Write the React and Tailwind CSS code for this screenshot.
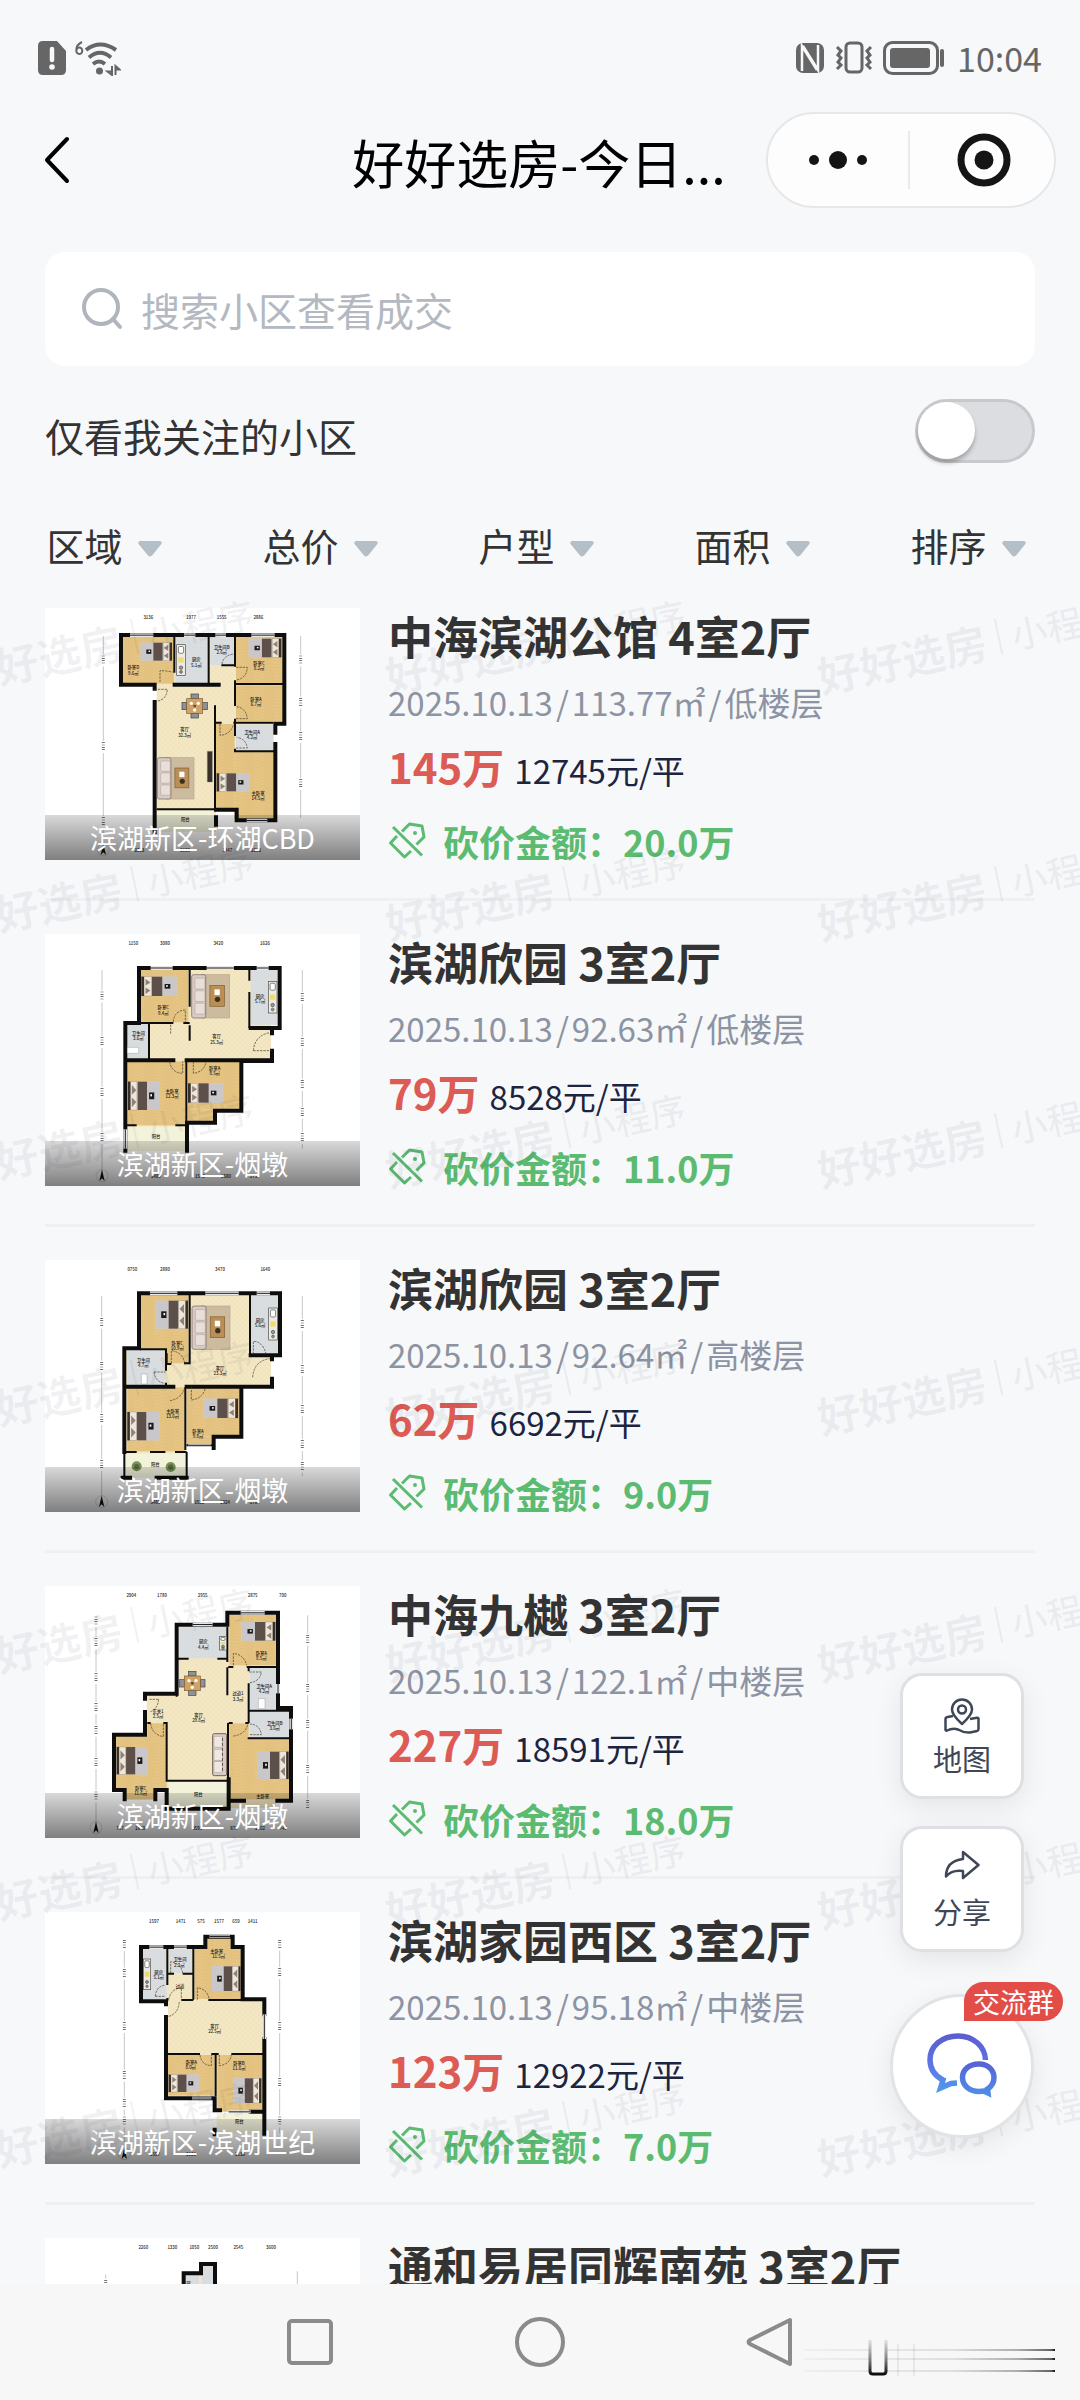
import React, { useState } from "react";

const FONT = "font-['Noto_Sans_CJK_SC',sans-serif]";

const FILL = { wood: "#e6c584", tile: "#dadde0", beige: "#f3e7c4", pale: "#f3f3dc", rug: "#cdbba0" };

/* ---------- floor plan furniture ---------- */

function Bed({ x, y, w, h, head }) {
  const flip = head === "r";
  return (
    <g transform={flip ? `translate(${x + w} ${y}) scale(-1 1)` : `translate(${x} ${y})`}>
      <rect width={w} height={h} fill="#d9d6d3" />
      <rect width={w * 0.28} height={h} fill="#efe6da" stroke="#8b7d70" strokeWidth="1" />
      <rect width={w * 0.08} height={h} fill="#3a302b" />
      <path d={`M${w * 0.12} ${h * 0.12} L${w * 0.26} ${h * 0.3} L${w * 0.12} ${h * 0.46}Z`} fill="#8f8175" />
      <path d={`M${w * 0.12} ${h * 0.56} L${w * 0.26} ${h * 0.72} L${w * 0.12} ${h * 0.9}Z`} fill="#8f8175" />
      <rect x={w * 0.3} width={w * 0.3} height={h} fill="#5d504a" />
      <rect x={w * 0.6} width={w * 0.4} height={h} fill="#c9c7c9" />
      <rect x={w * 0.66} y={h * 0.38} width={w * 0.16} height={h * 0.24} fill="#1c1a19" />
      <rect x={w * 0.7} y={h * 0.44} width={w * 0.05} height={h * 0.08} fill="#fff" />
    </g>
  );
}

function Lounge({ x, y, w, h }) {
  return (
    <g transform={`translate(${x} ${y})`}>
      <rect x={w * 0.25} width={w * 0.75} height={h} fill={FILL.rug} stroke="#b9a68a" strokeWidth="2" />
      <rect width={w * 0.37} height={h} rx="6" fill="#d8cbc3" stroke="#6f625b" strokeWidth="2" />
      <rect x="10" y={h * 0.08} width={w * 0.26} height={h * 0.25} rx="4" fill="#e9dfd8" stroke="#8d8078" strokeWidth="1" />
      <rect x="10" y={h * 0.37} width={w * 0.26} height={h * 0.25} rx="4" fill="#e9dfd8" stroke="#8d8078" strokeWidth="1" />
      <rect x="10" y={h * 0.66} width={w * 0.26} height={h * 0.25} rx="4" fill="#e9dfd8" stroke="#8d8078" strokeWidth="1" />
      <rect x={w * 0.48} y={h * 0.25} width={w * 0.38} height={h * 0.48} fill="#b98f55" stroke="#7d5c31" strokeWidth="2" />
      <rect x={w * 0.6} y={h * 0.34} width={w * 0.14} height={h * 0.13} fill="#fff" />
      <circle cx={w * 0.68} cy={h * 0.57} r={w * 0.07} fill="#3a2f22" />
    </g>
  );
}

function Sofa({ x, y, w, h }) {
  return (
    <g transform={`translate(${x} ${y})`}>
      <rect width={w} height={h} rx="5" fill="#d8cbc3" stroke="#6f625b" strokeWidth="3" />
      <rect x="4" y={h * 0.06} width={w * 0.6} height={h * 0.26} fill="#efe7e1" stroke="#8d8078" strokeWidth="1" />
      <rect x="4" y={h * 0.37} width={w * 0.6} height={h * 0.26} fill="#efe7e1" stroke="#8d8078" strokeWidth="1" />
      <rect x="4" y={h * 0.67} width={w * 0.6} height={h * 0.26} fill="#efe7e1" stroke="#8d8078" strokeWidth="1" />
      <path d={`M${w * 0.7} ${h * 0.1} V${h * 0.9}`} stroke="#5b4e48" strokeWidth="3" strokeDasharray="9 6" />
    </g>
  );
}

function Dining({ x, y }) {
  return (
    <g transform={`translate(${x} ${y})`}>
      <g fill="#8c9298" stroke="#3c4044" strokeWidth="2">
        <rect x="-11" y="-36" width="22" height="14" />
        <rect x="-11" y="22" width="22" height="14" />
        <rect x="-38" y="-11" width="14" height="22" />
        <rect x="24" y="-11" width="14" height="22" />
      </g>
      <rect x="-24" y="-22" width="48" height="44" fill="#cfa367" stroke="#7d5c31" strokeWidth="2" />
      <circle cx="-10" cy="-8" r="5" fill="#fff" />
      <circle cx="11" cy="-8" r="5" fill="#fff" />
      <circle cx="0" cy="12" r="5" fill="#fff" />
      <circle cx="0" cy="0" r="4" fill="#5f4322" />
    </g>
  );
}

function Stove({ x, y, w, h }) {
  return (
    <g transform={`translate(${x} ${y})`} stroke="#4a4a4a">
      <rect width={w} height={h} fill="#eceae2" strokeWidth="2" />
      <rect x={w * 0.2} y={h * 0.06} width={w * 0.6} height={h * 0.22} rx="4" fill="#fff" strokeWidth="2" />
      <rect x={w * 0.2} y={h * 0.42} width={w * 0.6} height={h * 0.16} fill="#eedb6a" stroke="none" />
      <circle cx={w * 0.5} cy={h * 0.75} r={w * 0.2} fill="#999" strokeWidth="2" />
      <circle cx={w * 0.5} cy={h * 0.89} r={w * 0.16} fill="#999" strokeWidth="2" />
    </g>
  );
}

const FURNITURE = { bed: Bed, lounge: Lounge, sofa: Sofa, dining: Dining, stove: Stove };

/* ---------- floor plan data ---------- */

const PLANS = {
  harbour: {
    box: "15 28 945 756",
    base: "M248 115H728V370H700V660H596V630H528V700H350V258H248Z",
    rooms: [
      ["wood", 248, 115, 154, 140], ["tile", 406, 115, 98, 138], ["tile", 511, 115, 72, 84],
      ["wood", 588, 115, 140, 138], ["wood", 588, 260, 140, 108], ["tile", 588, 378, 112, 78],
      ["wood", 528, 376, 56, 254], ["wood", 583, 460, 117, 200], ["pale", 350, 636, 172, 64],
    ],
    outer: "M404 258H536M243 109H733V375H706V402M706 436V665H590V633H528M243 109V258H344V270M344 310V700M528 656V678",
    inner: "M403 109V222M506 109V256M585 109V204M585 245V322M585 360V376M544 200H585M585 256H733M525 320V630M350 632H525M525 372H545M580 372H700M585 376V412M585 450V458H706",
    windows: [[270, 104, 70, 11], [432, 104, 34, 11], [526, 104, 32, 11], [634, 104, 70, 11], [620, 660, 62, 11]],
    doors: "M360 250V216Q375 216 398 220M344 272H382Q380 304 348 308M588 206H622Q620 238 590 244M588 360H622Q618 328 590 324M540 376V410Q570 408 580 380M588 448H622Q618 420 590 416M546 196Q550 170 582 166",
    furniture: [
      ["bed", 302, 132, 94, 54, "r"], ["bed", 626, 120, 98, 56, "r"], ["bed", 530, 524, 98, 54, "l"],
      ["stove", 410, 138, 26, 92], ["dining", 464, 322], ["lounge", 352, 477, 110, 124],
    ],
    extra: "M502 458H517V550H502Z",
    labels: [
      [280, 207, "卧室D"], [280, 224, "9.6㎡"], [469, 184, "厨房"], [469, 200, "5.1㎡"], [545, 146, "卫生间B"],
      [545, 161, "2.6㎡"], [657, 194, "卧室C"], [657, 210, "8.2㎡"], [648, 302, "卧室A"], [648, 318, "6.7㎡"],
      [434, 394, "客厅"], [434, 411, "32.3㎡"], [636, 402, "卫生间A"], [636, 418, "4.2㎡"], [654, 584, "主卧室"],
      [654, 600, "14.5㎡"], [436, 664, "阳台"],
    ],
    top: [[325, "3136"], [453, "1977"], [545, "1555"], [655, "2886"]],
    bottom: [[298, "2313"], [435, "3608"], [562, "1447"], [648, "2363"]],
    left: [190, 112, 750, [185, 445, 670]],
    right: [782, 112, 658, [185, 312, 415, 556]],
  },
  garden: {
    box: "15 18 945 756",
    base: "M303 125H715V292H693V400H600V545H525V580H440V668H262V290H303Z",
    rooms: [
      ["wood", 303, 125, 142, 158], ["tile", 632, 125, 80, 165], ["tile", 262, 288, 64, 104],
      ["wood", 262, 400, 174, 192], ["wood", 443, 400, 156, 145], ["wood", 443, 545, 78, 35], ["pale", 262, 596, 172, 72],
    ],
    outer: "M297 285V120H719V300H632M696 300V316M696 368V399H604V548H525V584H441V668M297 285H256V668M256 397H400M440 397H696",
    inner: "M449 120V236M449 292V338M300 285H400M430 285H449M327 288V395M628 120V158M628 192V300M439 400V590M256 592H290M406 592H440",
    windows: [[332, 114, 66, 12], [500, 114, 82, 12], [650, 114, 36, 12], [250, 604, 12, 58]],
    doors: "M400 282Q402 248 436 246V285M640 368Q644 322 690 314M640 368H696M388 400Q396 436 428 436V400M460 400V436Q492 432 498 402M392 290V320",
    furniture: [
      ["bed", 304, 146, 106, 58, "l"], ["bed", 264, 461, 96, 85, "l"], ["bed", 444, 466, 104, 58, "l"],
      ["lounge", 455, 140, 114, 130], ["stove", 685, 160, 26, 95],
    ],
    extra: "M262 358H296V376H262Z",
    extraFill: "#fff",
    labels: [
      [370, 240, "卧室C"], [370, 256, "9.4㎡"], [530, 326, "客厅"], [530, 343, "25.3㎡"], [660, 206, "厨房"], [660, 222, "5.7㎡"],
      [295, 318, "卫生间"], [295, 333, "3.6㎡"], [396, 490, "主卧室"], [396, 506, "12.3㎡"], [524, 422, "卧室A"], [524, 438, "8.5㎡"],
      [348, 625, "阳台"],
    ],
    top: [[280, "1150"], [375, "3080"], [535, "3420"], [675, "1626"]],
    bottom: [[348, "3480"], [480, "1540"], [558, "1580"], [644, "1751"]],
    left: [186, 126, 740, [205, 342, 495, 630]],
    right: [787, 126, 662, [210, 345, 470, 555, 630]],
  },
  gardenHigh: {
    box: "15 20 945 756",
    base: "M303 125H717V300H693V400H600V550H520V578H438V672H254V290H303Z",
    rooms: [
      ["wood", 303, 125, 142, 205], ["tile", 632, 125, 82, 175], ["tile", 262, 290, 112, 106],
      ["wood", 262, 402, 172, 192], ["wood", 441, 402, 158, 148], ["wood", 441, 550, 76, 28], ["pale", 256, 600, 182, 72],
    ],
    outer: "M297 285V120H720V306H632M696 306V318M696 376V400H604V550H521V584M297 285H253V596M253 400H400M440 400H696M248 673H270M350 673H440",
    inner: "M449 120V330H432M380 300V332H394M300 288H378V352M378 388V398M630 120V306M436 402V590M253 596H290M330 596H376M405 596H440M440 576H521M253 600V672M440 596V668",
    windows: [[330, 114, 82, 12], [496, 114, 100, 12], [650, 114, 40, 12], [445, 573, 68, 8]],
    doors: "M394 330V292Q428 296 434 330M342 356H376M342 356Q346 386 374 390M390 442Q424 436 434 404M454 400V440Q488 436 496 404M640 302V264Q668 264 678 302M638 372Q642 322 690 316",
    furniture: [
      ["bed", 346, 142, 98, 84, "r"], ["bed", 262, 476, 96, 85, "l"], ["bed", 490, 436, 104, 58, "r"],
      ["lounge", 456, 158, 114, 130], ["stove", 686, 164, 26, 96],
    ],
    extra: "M304 362H321V392H304Z",
    extraFill: "#fff",
    plants: [[290, 639], [392, 641]],
    labels: [
      [412, 270, "卧室C"], [412, 286, "10.9㎡"], [540, 346, "客厅"], [540, 361, "23.3㎡"], [660, 203, "厨房"], [660, 218, "5.6㎡"],
      [310, 322, "卫生间"], [310, 338, "4.7㎡"], [398, 474, "主卧室"], [398, 491, "13.6㎡"], [474, 536, "卧室A"], [474, 551, "9.8㎡"],
      [346, 634, "阳台"],
    ],
    top: [[277, "0750"], [375, "2880"], [540, "3470"], [676, "1640"]],
    bottom: [[346, "3480"], [478, "1532"], [555, "1824"], [644, "1786"]],
    left: [185, 128, 740, [208, 340, 497, 635]],
    right: [787, 128, 668, [215, 350, 470, 575, 640]],
  },
  jiuyue: {
    box: "15 24 945 756",
    base: "M418 146H568V110H708V395H748V665H708V690H384V630H350V665H250V630H228V475H320V352H416Z",
    rooms: [
      ["tile", 418, 146, 142, 95], ["wood", 568, 110, 141, 152], ["tile", 630, 270, 79, 124], ["tile", 630, 402, 118, 78],
      ["wood", 228, 475, 152, 155], ["wood", 322, 436, 58, 50], ["wood", 250, 628, 90, 36], ["wood", 568, 436, 58, 228],
      ["wood", 620, 484, 128, 180], ["pale", 386, 612, 174, 78],
    ],
    outer: "M410 347V140H562V104H714V390H753V668H712M568 668H612M714 668H753M410 347H315V362M315 402V470H222V636H254V664M346 664V636H380M380 636V692H566V604",
    inner: "M562 146V252M562 268V352M410 242H446M532 242H562M626 265V280M626 316V436M565 267H580M620 267H714M626 398H753M380 432V608H562M322 435H332M370 435H380M566 435H578M616 435H626M564 435V604M626 478V481H753M410 347V356",
    windows: [[458, 134, 60, 11], [602, 99, 72, 11], [708, 318, 12, 28], [748, 422, 12, 32]],
    doors: "M580 262V226Q612 230 620 262M628 282H664Q660 310 630 314M328 364H356M356 364Q352 396 328 402M332 436Q336 470 370 476V436M580 474Q616 470 624 438M630 470H664Q660 440 630 438",
    furniture: [
      ["bed", 604, 132, 102, 56, "r"], ["bed", 230, 507, 94, 82, "l"], ["bed", 652, 521, 94, 82, "r"],
      ["dining", 457, 316], ["sofa", 518, 467, 42, 126], ["stove", 538, 176, 22, 40],
    ],
    extra: "M655 362H675V392H655Z",
    extraFill: "#fff",
    labels: [
      [490, 192, "厨房"], [490, 208, "4.4㎡"], [664, 226, "卧室A"], [664, 241, "8.5㎡"], [672, 326, "卫生间A"], [672, 342, "4.2㎡"],
      [594, 348, "过道1"], [594, 364, "3.3㎡"], [354, 400, "玄关1"], [354, 416, "2.5㎡"], [476, 413, "客厅"], [476, 429, "29.8㎡"],
      [704, 437, "卫生间B"], [704, 453, "3.6㎡"], [302, 632, "卧室C"], [302, 646, "11.6㎡"], [668, 656, "主卧室"], [475, 650, "阳台"],
    ],
    top: [[274, "2904"], [366, "1780"], [488, "2955"], [638, "2875"], [728, "700"]],
    bottom: [[240, "757"], [300, "1803"], [472, "3595"], [582, "870"], [660, "2502"], [730, "740"]],
    left: [168, 112, 740, [130, 195, 300, 390, 458, 555, 655]],
    right: [803, 112, 692, [185, 332, 440, 575, 680]],
  },
  century: {
    box: "15 27 945 756",
    base: "M306 138H500V106H574V138H604V290H670V625H530V578H384V290H306Z",
    rooms: [
      ["tile", 306, 138, 74, 150], ["tile", 386, 138, 70, 72], ["wood", 464, 138, 140, 150], ["wood", 500, 106, 74, 36],
      ["wood", 384, 456, 140, 122], ["wood", 532, 456, 136, 170], ["pale", 530, 630, 138, 62],
    ],
    outer: "M378 295H303V132H496V101H578V132H608V289H673V334M673 408V628M378 295V304M378 342V586H524V622H540M632 626H673V692M524 680V694",
    inner: "M382 132V246M460 132V290M382 212H402M428 212H460M424 291H460M505 291H608M382 453H480M514 453H536M574 453H673M527 453V580M382 285V295",
    windows: [[328, 127, 42, 11], [402, 127, 38, 11], [508, 97, 62, 7], [456, 581, 58, 8], [668, 334, 10, 74], [566, 622, 66, 9]],
    doors: "M472 290V254Q502 258 508 290M386 340Q416 332 418 294M346 280H376M346 280Q348 250 376 246M386 290Q392 258 424 254V290M480 456Q484 486 514 488V456M538 456V488Q570 484 574 456M428 210Q424 182 392 176V210",
    furniture: [["bed", 516, 190, 86, 74, "r"], ["bed", 386, 515, 90, 52, "l"], ["bed", 580, 526, 84, 74, "r"], ["stove", 310, 168, 22, 92]],
    labels: [
      [356, 208, "厨房"], [356, 223, "5.1㎡"], [420, 170, "卫生间"], [418, 187, "2.2㎡"], [420, 250, "过道"], [530, 146, "主卧室"], [536, 160, "11.5㎡"],
      [524, 370, "客厅"], [524, 385, "22.5㎡"], [454, 478, "卧室A"], [452, 493, "8.0㎡"], [597, 482, "卧室B"], [597, 497, "11.6㎡"],
      [598, 656, "阳台"],
    ],
    top: [[342, "1597"], [422, "1471"], [483, "575"], [537, "1577"], [588, "659"], [638, "1411"]],
    bottom: [[345, "1597"], [453, "3131"], [600, "3130"]],
    left: [253, 108, 760, [125, 212, 372, 518, 602, 655]],
    right: [719, 108, 690, [125, 210, 372, 540, 655]],
  },
  huinan: {
    box: "0 0 945 756",
    base: "M418 108H470V84H508V300H418Z",
    rooms: [["tile", 418, 100, 44, 200], ["tile", 470, 84, 38, 220]],
    outer: "M416 300V106H468V78H510V300",
    inner: "",
    windows: [],
    doors: "",
    furniture: [],
    labels: [[430, 136, "厨"]],
    top: [[295, "2260"], [382, "1330"], [448, "1050"], [504, "2500"], [580, "2545"], [678, "3600"]],
    bottom: [],
    left: [182, 110, 640, [140]],
    right: [757, 100, 640, []],
  },
};

function FloorPlan({ id }) {
  const p = PLANS[id];
  const [, y0] = p.box.split(" ").map(Number);
  return (
    <svg viewBox={p.box} className="block h-full w-full" role="img" aria-label="户型图" preserveAspectRatio="xMidYMid meet">
      <defs>
        <pattern id={`wood-${id}`} width="60" height="10" patternUnits="userSpaceOnUse">
          <rect width="60" height="10" fill={FILL.wood} />
          <path d="M0 2H40M15 7H60" stroke="#dfbd78" strokeWidth="2" />
        </pattern>
        <pattern id={`beige-${id}`} width="16" height="16" patternUnits="userSpaceOnUse">
          <rect width="16" height="16" fill={FILL.beige} />
          <path d="M0 0L16 16M16 0L0 16" stroke="#eddcae" strokeWidth="1" />
        </pattern>
        <pattern id={`tile-${id}`} width="12" height="12" patternUnits="userSpaceOnUse">
          <rect width="12" height="12" fill={FILL.tile} />
          <path d="M0 0H12M0 0V12" stroke="#cfd3d7" strokeWidth="1" />
        </pattern>
      </defs>
      <path d={p.base} fill={`url(#beige-${id})`} />
      {p.rooms.map(([kind, x, y, w, h], i) => (
        <rect key={i} x={x} y={y} width={w} height={h} fill={kind === "pale" ? FILL.pale : `url(#${kind}-${id})`} />
      ))}
      <path d={p.inner} fill="none" stroke="#0d0d0d" strokeWidth="6" />
      <path d={p.outer} fill="none" stroke="#0d0d0d" strokeWidth="12" strokeLinecap="square" />
      {p.windows.map(([x, y, w, h], i) => (
        <g key={i}>
          <rect x={x} y={y} width={w} height={h} fill="#e8e8e8" />
          <path d={w > h ? `M${x} ${y + h / 2}H${x + w}` : `M${x + w / 2} ${y}V${y + h}`} stroke="#222" strokeWidth="3" />
        </g>
      ))}
      <path d={p.doors} fill="none" stroke="#3b3524" strokeWidth="2" strokeDasharray="7 3" />
      {p.furniture.map(([kind, x, y, w, h, head], i) => {
        const Piece = FURNITURE[kind];
        return <Piece key={i} x={x} y={y} w={w} h={h} head={head} />;
      })}
      {p.extra && <path d={p.extra} fill={p.extraFill || "#3a302b"} stroke="#777" strokeWidth="1" />}
      {(p.plants || []).map(([x, y]) => (
        <g key={x}>
          <circle cx={x} cy={y} r="15" fill="#7c9159" />
          <circle cx={x} cy={y} r="8" fill="#52683a" />
        </g>
      ))}
      <g fontSize="13" fontWeight="500" fill="#1a1a1a" textAnchor="middle">
        {p.labels.map(([x, y, t]) => (
          <text key={`${x}-${y}`} x={x} y={y + 4}>{t}</text>
        ))}
        {p.top.map(([x, t]) => (
          <text key={x} x={x} y={y0 + 34}>{t}</text>
        ))}
        {p.bottom.map(([x, t]) => (
          <text key={x} x={x} y={y0 + 733}>{t}</text>
        ))}
      </g>
      {[p.left, p.right].map(([x, a, b, marks]) => (
        <g key={x}>
          <path d={`M${x} ${a}V${b}`} stroke="#aaa" strokeWidth="2" />
          {marks.map((m) => (
            <g key={m}>
              <rect x={x - 5} y={m - 18} width="10" height="36" fill="#fff" />
              <path d={`M${x} ${m - 14}V${m + 14}`} stroke="#444" strokeWidth="9" strokeDasharray="2 5" />
            </g>
          ))}
        </g>
      ))}
      <g transform={`translate(${p.left[0]} ${y0 + 725})`}>
        <circle r="18" fill="none" stroke="#999" strokeWidth="1" />
        <path d="M0 -18L8 16L0 8L-8 16Z" fill="#111" />
      </g>
    </svg>
  );
}

/* ---------- icons ---------- */

function CutTagIcon() {
  return (
    <svg viewBox="0 0 38 38" className="size-[38px] shrink-0" fill="none" stroke="currentColor" strokeWidth="3" strokeLinejoin="round" aria-hidden="true">
      <path d="M14 9.500L21.500 2L34 4L36 15L28.500 22.500" />
      <path d="M9 14L2.500 21L16.500 35L23 29" />
      <path d="M5 5L34 33.500" />
      <circle cx="27" cy="11" r="2" fill="currentColor" stroke="none" />
    </svg>
  );
}

function StatusBar() {
  return (
    <div className="flex h-[104px] items-center justify-between px-[38px] pt-3 text-[#666]">
      <div className="flex items-center gap-[9px]">
        <svg viewBox="0 0 28 34" className="h-[34px] w-[28px]" aria-label="SIM">
          <path d="M5 0H19L28 10V29Q28 34 23 34H5Q0 34 0 29V5Q0 0 5 0Z" fill="currentColor" />
          <path d="M14 8V19" stroke="#f7f8fa" strokeWidth="4.500" strokeLinecap="round" />
          <circle cx="14" cy="26" r="2.800" fill="#f7f8fa" />
        </svg>
        <svg viewBox="0 0 46 36" className="h-9 w-[46px]" fill="none" stroke="currentColor" aria-label="Wi-Fi 6">
          <path d="M7 2Q1 5 1.300 10.500A3 3.300 0 1 0 4 7.500Q2 7.500 1.500 10" strokeWidth="2" />
          <path d="M11 10Q25 -1 41 10M14 17.500Q25 8 36 17.500M18 24Q24 19 30 24" strokeWidth="4" />
          <circle cx="24.500" cy="31" r="3.500" fill="currentColor" stroke="none" />
          <path d="M37 26V35L32.500 31.500H38M40.500 35V26L44.500 29.500H40" strokeWidth="2" />
        </svg>
      </div>
      <div className="flex items-center gap-[10px]">
        <svg viewBox="0 0 30 32" className="h-8 w-[30px]" aria-label="NFC">
          <rect x="1" y="1" width="28" height="30" rx="7" fill="currentColor" />
          <path d="M7 29V4L22 28" fill="none" stroke="#f7f8fa" strokeWidth="2.500" />
          <path d="M23 3V28L8 4" fill="none" stroke="#f7f8fa" strokeWidth="2.500" />
        </svg>
        <svg viewBox="0 0 38 34" className="h-[34px] w-[38px]" fill="none" stroke="currentColor" aria-label="振动">
          <rect x="11" y="2" width="16" height="29" rx="4" strokeWidth="3" />
          <path d="M2 6L6 10L3 14L6 17L3 21L6 24L2 28M36 6L32 10L35 14L32 17L35 21L32 24L36 28" strokeWidth="3" />
        </svg>
        <svg viewBox="0 0 62 34" className="h-[34px] w-[62px]" aria-label="电量">
          <rect x="1.500" y="1.500" width="53" height="31" rx="8" fill="none" stroke="currentColor" strokeWidth="3" />
          <rect x="7" y="7" width="40" height="20" rx="3" fill="currentColor" />
          <path d="M59 10V24" stroke="currentColor" strokeWidth="4" strokeLinecap="round" />
        </svg>
        <time className="pl-0.5 text-[34px] leading-[40px]">10:04</time>
      </div>
    </div>
  );
}

function Header() {
  return (
    <header className="grid h-[112px] grid-cols-[1fr_auto_1fr] items-center pr-6 pl-[42px]">
      <button type="button" aria-label="返回" className="justify-self-start text-black">
        <svg viewBox="0 0 28 48" className="h-12 w-[28px]" fill="none" stroke="currentColor" strokeWidth="4" strokeLinecap="round" strokeLinejoin="round">
          <path d="M25 3L5 24L25 45" />
        </svg>
      </button>
      <h1 className="pt-1 pr-5 text-[52px] leading-[64px] font-normal text-black">好好选房-今日...</h1>
      <div className="flex h-24 w-[290px] items-center justify-self-end rounded-full border-2 border-[#e6e7e9] bg-[#fdfdfd]">
        <button type="button" aria-label="更多" className="grid h-full flex-1 place-items-center">
          <svg viewBox="0 0 58 20" className="h-5 w-[58px]" fill="#151515">
            <circle cx="5" cy="10" r="5" />
            <circle cx="29" cy="10" r="9" />
            <circle cx="53" cy="10" r="5" />
          </svg>
        </button>
        <span className="h-[58px] w-0.5 bg-[#e9eaec]" />
        <button type="button" aria-label="关闭" className="grid h-full flex-1 place-items-center pl-1">
          <svg viewBox="0 0 54 54" className="size-[54px]">
            <circle cx="27" cy="27" r="23" fill="none" stroke="#151515" strokeWidth="7" />
            <circle cx="27" cy="27" r="9.500" fill="#151515" />
          </svg>
        </button>
      </div>
    </header>
  );
}

function Filters() {
  const names = ["区域", "总价", "户型", "面积", "排序"];
  return (
    <div className="mt-[54px] grid grid-cols-5">
      {names.map((n) => (
        <label key={n} className="flex items-center justify-center gap-[14px] pr-2">
          <select aria-label={n} className="appearance-none bg-transparent text-[38px] leading-[56px] text-[#333]">
            <option>{n}</option>
          </select>
          <svg viewBox="0 0 24 16" className="mt-2 h-4 w-6" fill="#b3bec6" aria-hidden="true">
            <path d="M2 0H22Q25 1 23 3.500L14 14.500Q12 16.500 10 14.500L1 3.500Q-1 1 2 0Z" />
          </svg>
        </label>
      ))}
    </div>
  );
}

/* ---------- listings ---------- */

const LISTINGS = [
  { plan: "harbour", place: "滨湖新区-环湖CBD", title: "中海滨湖公馆 4室2厅", area: "113.77", floor: "低楼层", price: "145", unit: "12745", cut: "20.0" },
  { plan: "garden", place: "滨湖新区-烟墩", title: "滨湖欣园 3室2厅", area: "92.63", floor: "低楼层", price: "79", unit: "8528", cut: "11.0" },
  { plan: "gardenHigh", place: "滨湖新区-烟墩", title: "滨湖欣园 3室2厅", area: "92.64", floor: "高楼层", price: "62", unit: "6692", cut: "9.0" },
  { plan: "jiuyue", place: "滨湖新区-烟墩", title: "中海九樾 3室2厅", area: "122.1", floor: "中楼层", price: "227", unit: "18591", cut: "18.0" },
  { plan: "century", place: "滨湖新区-滨湖世纪", title: "滨湖家园西区 3室2厅", area: "95.18", floor: "中楼层", price: "123", unit: "12922", cut: "7.0" },
  { plan: "huinan", title: "通和易居同辉南苑 3室2厅" },
];

function Listing({ item }) {
  return (
    <li className="shrink-0 border-b-[3px] border-[#eef0f2] pb-[38px]">
      <a href="#detail" className="flex items-start gap-7">
        <div className="relative h-[252px] w-[315px] shrink-0 bg-white">
          <FloorPlan id={item.plan} />
          {item.place && (
            <div className="absolute inset-x-0 bottom-0 bg-linear-to-b from-black/15 to-black/50 text-center text-[27px] leading-[45px] text-white">
              {item.place}
            </div>
          )}
        </div>
        <div className="min-w-0 flex-1 whitespace-nowrap">
          <h2 className="text-[45px] leading-[56px] font-bold text-[#333]">{item.title}</h2>
          {item.price && (
            <>
              <p className="mt-[14px] flex text-[33px] leading-[48px] text-[#8c93a3]">
                <span>2025.10.13</span>
                <span className="px-[3px]">/</span>
                <span>{item.area}㎡</span>
                <span className="px-[3px]">/</span>
                <span>{item.floor}</span>
              </p>
              <p className="mt-3 flex h-14 items-baseline gap-[10px] leading-[56px]">
                <strong className="text-[42px] font-bold text-[#dd5b55]">{item.price}万</strong>
                <span className="text-[33px] text-[#1c2540]">{item.unit}元/平</span>
              </p>
              <p className="mt-7 flex items-center gap-[17px] text-[36px] leading-[38px] font-bold text-[#5bbb70]">
                <CutTagIcon />
                <span>砍价金额：{item.cut}万</span>
              </p>
            </>
          )}
        </div>
      </a>
    </li>
  );
}

function Watermark() {
  return (
    <div aria-hidden="true" className="pointer-events-none absolute inset-x-0 top-0 -ml-9 grid auto-rows-[247px] grid-cols-[432px_432px_432px] pt-[27px] text-[#202840]/6">
      {Array.from({ length: 21 }, (_, i) => (
        <div key={i} className="flex h-[100px] origin-bottom-left -rotate-12 items-center whitespace-nowrap">
          <span className="text-[43px] font-bold">好好选房</span>
          <span className="mx-3 h-9 w-0.5 bg-current" />
          <span className="text-[36px] font-medium">小程序</span>
        </div>
      ))}
    </div>
  );
}

function FloatingActions() {
  const tile = "flex h-[126px] w-[124px] flex-col items-center justify-center rounded-[22px] border-[3px] border-[#dfe0e3] bg-white text-[29px] leading-[40px] text-[#3f4757] shadow-[0_8px_28px_rgba(0,0,0,0.08)]";
  return (
    <div className="absolute right-[46px] bottom-[146px] flex flex-col items-center">
      <button type="button" className={tile}>
        <svg viewBox="0 0 36 36" className="mt-1 mb-1 size-9" fill="none" stroke="currentColor" strokeWidth="2.500" strokeLinejoin="round" aria-hidden="true">
          <path d="M18 26Q8 17 8 11.500A10 10 0 0 1 28 11.500Q28 17 18 26Z" />
          <circle cx="18" cy="11.500" r="4" />
          <path d="M9 18L3.500 19Q1.500 19.500 1.500 21V31.500Q1.500 33 3 32.500Q9 29.500 14 31.500Q20 35 26 34.500L33 33Q34.500 32.500 34.500 31V21Q34.500 19.500 33 19.700L26 21" />
        </svg>
        地图
      </button>
      <button type="button" className={`${tile} mt-[27px]`}>
        <svg viewBox="0 0 36 36" className="mb-2 size-9" fill="none" stroke="currentColor" strokeWidth="2.500" strokeLinejoin="round" aria-hidden="true">
          <path d="M19 5L34.500 18L19 31V24Q8 22.500 2 29.500Q2 14 19 12Z" />
        </svg>
        分享
      </button>
      <button type="button" aria-label="交流群" className="relative mt-[42px] grid size-36 place-items-center rounded-full border-[3px] border-[#e2e3e6] bg-white shadow-[0_8px_28px_rgba(0,0,0,0.08)]">
        <svg viewBox="0 0 70 66" className="h-[66px] w-[70px]" fill="none" strokeWidth="5.500" aria-hidden="true">
          <defs>
            <linearGradient id="chat" x1="0" y1="0" x2="0" y2="66" gradientUnits="userSpaceOnUse">
              <stop offset="0" stopColor="#5b5bcf" />
              <stop offset="0.550" stopColor="#5b7ae6" />
              <stop offset="1" stopColor="#4aa5ec" />
            </linearGradient>
            <linearGradient id="chat2" x1="0" y1="28" x2="0" y2="66" gradientUnits="userSpaceOnUse">
              <stop offset="0" stopColor="#5560d6" />
              <stop offset="1" stopColor="#4f93ea" />
            </linearGradient>
          </defs>
          <path d="M58.500 27C58 13 46 3 31 3C15 3 3 13 3 26.500C3 36 8 43 16 47L13.500 55L24 50.500L30 50" stroke="url(#chat)" />
          <path d="M52 31C42 31 35.500 37 35.500 44.500C35.500 53 43 58.500 52 58.500L57 58L61 60L60.500 56C64.500 53.500 67 50 67 44.500C67 37 61 31 52 31Z" stroke="url(#chat2)" />
        </svg>
        <span className="absolute -top-[15px] left-[71px] rounded-[20px] rounded-bl-none bg-[#e34d47] px-[9px] text-[27px] leading-[39px] whitespace-nowrap text-white">交流群</span>
      </button>
    </div>
  );
}

function SystemNav() {
  return (
    <nav className="relative flex h-[116px] shrink-0 items-start justify-center gap-[178px] bg-[#f7f7f7] pt-8 text-[#8b8b8b]">
      <button type="button" aria-label="最近任务">
        <svg viewBox="0 0 52 52" className="size-[52px]" fill="none" stroke="currentColor" strokeWidth="4">
          <rect x="5" y="5" width="42" height="42" rx="3" />
        </svg>
      </button>
      <button type="button" aria-label="主屏幕">
        <svg viewBox="0 0 52 52" className="size-[52px]" fill="none" stroke="currentColor" strokeWidth="4">
          <circle cx="26" cy="26" r="23" />
        </svg>
      </button>
      <button type="button" aria-label="返回上一页">
        <svg viewBox="0 0 52 52" className="size-[52px]" fill="none" stroke="currentColor" strokeWidth="4" strokeLinejoin="round">
          <path d="M46 4V48L6 28Q3 26 6 24Z" />
        </svg>
      </button>
      <svg viewBox="0 0 256 44" className="absolute right-6 bottom-5 h-11 w-64" fill="none" aria-hidden="true">
        <defs>
          <linearGradient id="streak" x1="0" x2="256" y1="0" y2="0" gradientUnits="userSpaceOnUse">
            <stop offset="0" stopColor="#000" stopOpacity="0.030" />
            <stop offset="0.600" stopColor="#000" stopOpacity="0.100" />
            <stop offset="0.850" stopColor="#000" stopOpacity="0.300" />
            <stop offset="0.980" stopColor="#000" stopOpacity="0.600" />
            <stop offset="1" stopColor="#000" />
          </linearGradient>
          <linearGradient id="drop" x1="0" x2="0" y1="0" y2="40" gradientUnits="userSpaceOnUse">
            <stop offset="0" stopColor="#000" stopOpacity="0" />
            <stop offset="0.600" stopColor="#000" stopOpacity="0.500" />
            <stop offset="1" stopColor="#000" />
          </linearGradient>
        </defs>
        <path d="M4 13H255V15H4ZM4 22H255V24H4ZM4 34H255V36H4Z" fill="url(#streak)" />
        <rect x="69" y="4" width="18" height="34" fill="#f7f7f7" />
        <path d="M70 4V35Q70 38 73 38H83Q86 38 86 35V4" stroke="url(#drop)" strokeWidth="3" />
        <path d="M98 8V40M114 8V40" stroke="#000" strokeOpacity="0.060" strokeWidth="2" />
      </svg>
    </nav>
  );
}

export default function App() {
  const [followed, setFollowed] = useState(false);
  return (
    <div className={`${FONT} relative flex h-screen flex-col overflow-hidden bg-[#f7f8fa]`}>
      <StatusBar />
      <Header />
      <div className="px-[45px] pt-9">
        <label className="flex h-[114px] items-center gap-[18px] rounded-[20px] bg-white px-9">
          <svg viewBox="0 0 42 42" className="size-[42px] shrink-0" fill="none" stroke="#b0b5bd" strokeWidth="4" strokeLinecap="round" aria-hidden="true">
            <circle cx="20" cy="19" r="17" />
            <path d="M32 31L39 39" />
          </svg>
          <input type="search" aria-label="搜索小区" placeholder="搜索小区查看成交" className="w-full min-w-0 bg-transparent text-[39px] leading-[56px] outline-none placeholder:text-[#b3b8c1]" />
        </label>
        <label className="mt-[33px] flex items-start justify-between">
          <span className="pt-2 text-[39px] leading-[56px] text-[#333]">仅看我关注的小区</span>
          <span className="relative h-[64px] w-[120px]">
            <input type="checkbox" role="switch" checked={followed} onChange={() => setFollowed(!followed)} className="peer absolute inset-0 size-full appearance-none rounded-full border-[3px] border-[#c8c9cc] bg-[#dcdde1] checked:bg-[#5bbb70]" />
            <span className="pointer-events-none absolute top-[3px] left-[3px] size-[57px] rounded-full bg-white shadow-[0_4px_4px_rgba(0,0,0,0.25)] peer-checked:left-[60px]" />
          </span>
        </label>
      </div>
      <Filters />
      <main className="relative mt-6 flex-1 overflow-hidden pt-[11px]">
        <ul className="flex flex-col gap-[33px] px-[45px]">
          {LISTINGS.map((item) => (
            <Listing key={item.plan} item={item} />
          ))}
        </ul>
        <Watermark />
        <FloatingActions />
      </main>
      <SystemNav />
    </div>
  );
}
